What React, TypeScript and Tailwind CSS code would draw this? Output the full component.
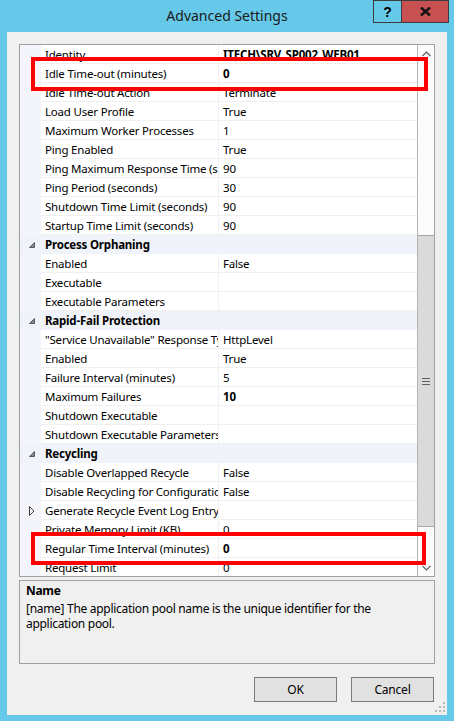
import React from "react";

type Row =
  | { kind: "row"; name: string; value?: string; bold?: boolean; collapsed?: boolean }
  | { kind: "cat"; name: string };

const rows: Row[] = [
  { kind: "row", name: "Identity", value: "ITECH\\SRV_SP002_WEB01", bold: true },
  { kind: "row", name: "Idle Time-out (minutes)", value: "0", bold: true },
  { kind: "row", name: "Idle Time-out Action", value: "Terminate" },
  { kind: "row", name: "Load User Profile", value: "True" },
  { kind: "row", name: "Maximum Worker Processes", value: "1" },
  { kind: "row", name: "Ping Enabled", value: "True" },
  { kind: "row", name: "Ping Maximum Response Time (seconds)", value: "90" },
  { kind: "row", name: "Ping Period (seconds)", value: "30" },
  { kind: "row", name: "Shutdown Time Limit (seconds)", value: "90" },
  { kind: "row", name: "Startup Time Limit (seconds)", value: "90" },
  { kind: "cat", name: "Process Orphaning" },
  { kind: "row", name: "Enabled", value: "False" },
  { kind: "row", name: "Executable", value: "" },
  { kind: "row", name: "Executable Parameters", value: "" },
  { kind: "cat", name: "Rapid-Fail Protection" },
  { kind: "row", name: "\"Service Unavailable\" Response Type", value: "HttpLevel" },
  { kind: "row", name: "Enabled", value: "True" },
  { kind: "row", name: "Failure Interval (minutes)", value: "5" },
  { kind: "row", name: "Maximum Failures", value: "10", bold: true },
  { kind: "row", name: "Shutdown Executable", value: "" },
  { kind: "row", name: "Shutdown Executable Parameters", value: "" },
  { kind: "cat", name: "Recycling" },
  { kind: "row", name: "Disable Overlapped Recycle", value: "False" },
  { kind: "row", name: "Disable Recycling for Configuration Changes", value: "False" },
  { kind: "row", name: "Generate Recycle Event Log Entry", value: "", collapsed: true },
  { kind: "row", name: "Private Memory Limit (KB)", value: "0" },
  { kind: "row", name: "Regular Time Interval (minutes)", value: "0", bold: true },
  { kind: "row", name: "Request Limit", value: "0" },
];

function ExpandedGlyph() {
  return (
    <svg width="6" height="6" viewBox="0 0 6 6">
      <polygon points="5.5,0.5 5.5,5.5 0.5,5.5" fill="#8a8a8a" stroke="#5a5a5a" strokeWidth="1" />
    </svg>
  );
}

function CollapsedGlyph() {
  return (
    <svg width="6" height="10" viewBox="0 0 6 10">
      <polygon points="0.5,0.5 5,5 0.5,9.5" fill="none" stroke="#404040" strokeWidth="1" />
    </svg>
  );
}

function GridRow({ row }: { row: Row }) {
  if (row.kind === "cat") {
    return (
      <div className="flex h-[19px] shrink-0 bg-[#f0f3f9]">
        <div className="w-[21px] shrink-0 flex items-center justify-center pl-[2px] pt-[1px]">
          <ExpandedGlyph />
        </div>
        <div className="flex-1 pl-[4px] pt-[1px] font-bold leading-[18px] whitespace-nowrap overflow-hidden">{row.name}</div>
      </div>
    );
  }
  return (
    <div className="flex h-[19px] shrink-0">
      <div className="w-[21px] shrink-0 bg-[#f3f5fa] flex items-center justify-center pl-[2px]">
        {row.collapsed ? <CollapsedGlyph /> : null}
      </div>
      <div className="flex-1 flex border-b border-[#f0f0f0] bg-white">
        <div className="w-[178px] shrink-0 border-r border-[#f0f0f0] pl-[4px] pt-[1px] leading-[17px] whitespace-nowrap overflow-hidden">
          {row.name}
        </div>
        <div className={"flex-1 pl-[4px] pt-[1px] leading-[17px] whitespace-nowrap overflow-hidden " + (row.bold ? "font-bold" : "")}>
          {row.value}
        </div>
      </div>
    </div>
  );
}

export default function App() {
  return (
    <div
      className="relative w-[454px] h-[721px] bg-[#66c9e9] flex flex-col text-[11.5px] tracking-[-0.2px] text-black overflow-hidden"
      style={{ fontFamily: '"Noto Sans", "Open Sans", sans-serif' }}
    >
      {/* Title bar */}
      <div className="relative h-[32px] shrink-0 flex items-center justify-center">
        <span className="text-[14px] tracking-normal text-[#1a1a1a] leading-none -mt-[1px]">Advanced Settings</span>
        <div className="absolute top-0 right-[5px] flex h-[23px]">
          <div className="w-[29px] h-[23px] border border-[#3c3c3c] flex items-center justify-center font-bold text-[14px] leading-none" style={{ fontFamily: '"Liberation Sans", sans-serif' }}>
            ?
          </div>
          <div className="w-[47px] h-[23px] border border-l-0 border-[#3c3c3c] bg-[#c75050] flex items-center justify-center">
            <svg width="11" height="9" viewBox="0 0 11 9">
              <path d="M1 0.5 L10 8.5 M10 0.5 L1 8.5" stroke="#111" strokeWidth="2.4" />
            </svg>
          </div>
        </div>
      </div>

      {/* Client area */}
      <div className="relative mx-[7px] mb-[6px] flex-1 bg-[#f0f0f0] flex flex-col px-[12px] pt-[12px]">
        {/* Property grid */}
        <div className="h-[533px] shrink-0 border border-[#a0a0a0] bg-white flex">
          <div className="w-[397px] shrink-0 flex flex-col overflow-hidden">
            {rows.map((r, i) => (
              <GridRow key={i} row={r} />
            ))}
          </div>
          {/* Scrollbar */}
          <div className="flex-1 border-l border-[#b4b4b4] bg-[#fbfbfb] flex flex-col">
            <div className="h-[17px] shrink-0 flex items-center justify-center">
              <svg width="9" height="6" viewBox="0 0 9 6">
                <path d="M0.5 5 L4.5 1 L8.5 5" fill="none" stroke="#606060" strokeWidth="1.2" />
              </svg>
            </div>
            <div className="h-[173px] shrink-0" />
            <div className="h-[292px] shrink-0 bg-[#dadada] border-y border-[#a6a6a6] flex items-center justify-center">
              <svg width="8" height="7" viewBox="0 0 8 7">
                <path d="M0 0.5 H8 M0 3.5 H8 M0 6.5 H8" stroke="#606060" strokeWidth="1" />
              </svg>
            </div>
            <div className="flex-1" />
            <div className="h-[17px] shrink-0 flex items-center justify-center">
              <svg width="9" height="6" viewBox="0 0 9 6">
                <path d="M0.5 1 L4.5 5 L8.5 1" fill="none" stroke="#606060" strokeWidth="1.2" />
              </svg>
            </div>
          </div>
        </div>

        {/* Description panel */}
        <div className="mt-[3px] h-[84px] shrink-0 border border-[#a0a0a0] bg-[#f0f0f0] pl-[6px] pt-[2px] text-[12px] tracking-[-0.3px]">
          <div className="font-bold leading-[15px]">Name</div>
          <div className="mt-[3px] leading-[15px]">
            [name] The application pool name is the unique identifier for the
            <br />
            application pool.
          </div>
        </div>

        {/* Buttons */}
        <div className="mt-[13px] flex justify-end gap-[14px] pr-[1px]">
          <button className="w-[83px] h-[25px] border border-[#7a7a7a] bg-[#e1e1e1] leading-none text-[12px]">OK</button>
          <button className="w-[83px] h-[25px] border border-[#7a7a7a] bg-[#e1e1e1] leading-none text-[12px]">Cancel</button>
        </div>

        {/* Resize grip */}
        <svg className="absolute right-[1px] bottom-[2px]" width="11" height="11" viewBox="0 0 11 11">
          <rect x="8" y="0" width="2" height="2" fill="#b8b8b8" />
          <rect x="4" y="4" width="2" height="2" fill="#b8b8b8" />
          <rect x="8" y="4" width="2" height="2" fill="#b8b8b8" />
          <rect x="0" y="8" width="2" height="2" fill="#b8b8b8" />
          <rect x="4" y="8" width="2" height="2" fill="#b8b8b8" />
          <rect x="8" y="8" width="2" height="2" fill="#b8b8b8" />
        </svg>
      </div>

      {/* Red highlight boxes */}
      <div className="absolute left-[31px] top-[57px] w-[397px] h-[34px] border-[4px] border-[#ff0000]" />
      <div className="absolute left-[31px] top-[532px] w-[395px] h-[33px] border-[4px] border-[#ff0000]" />
    </div>
  );
}
